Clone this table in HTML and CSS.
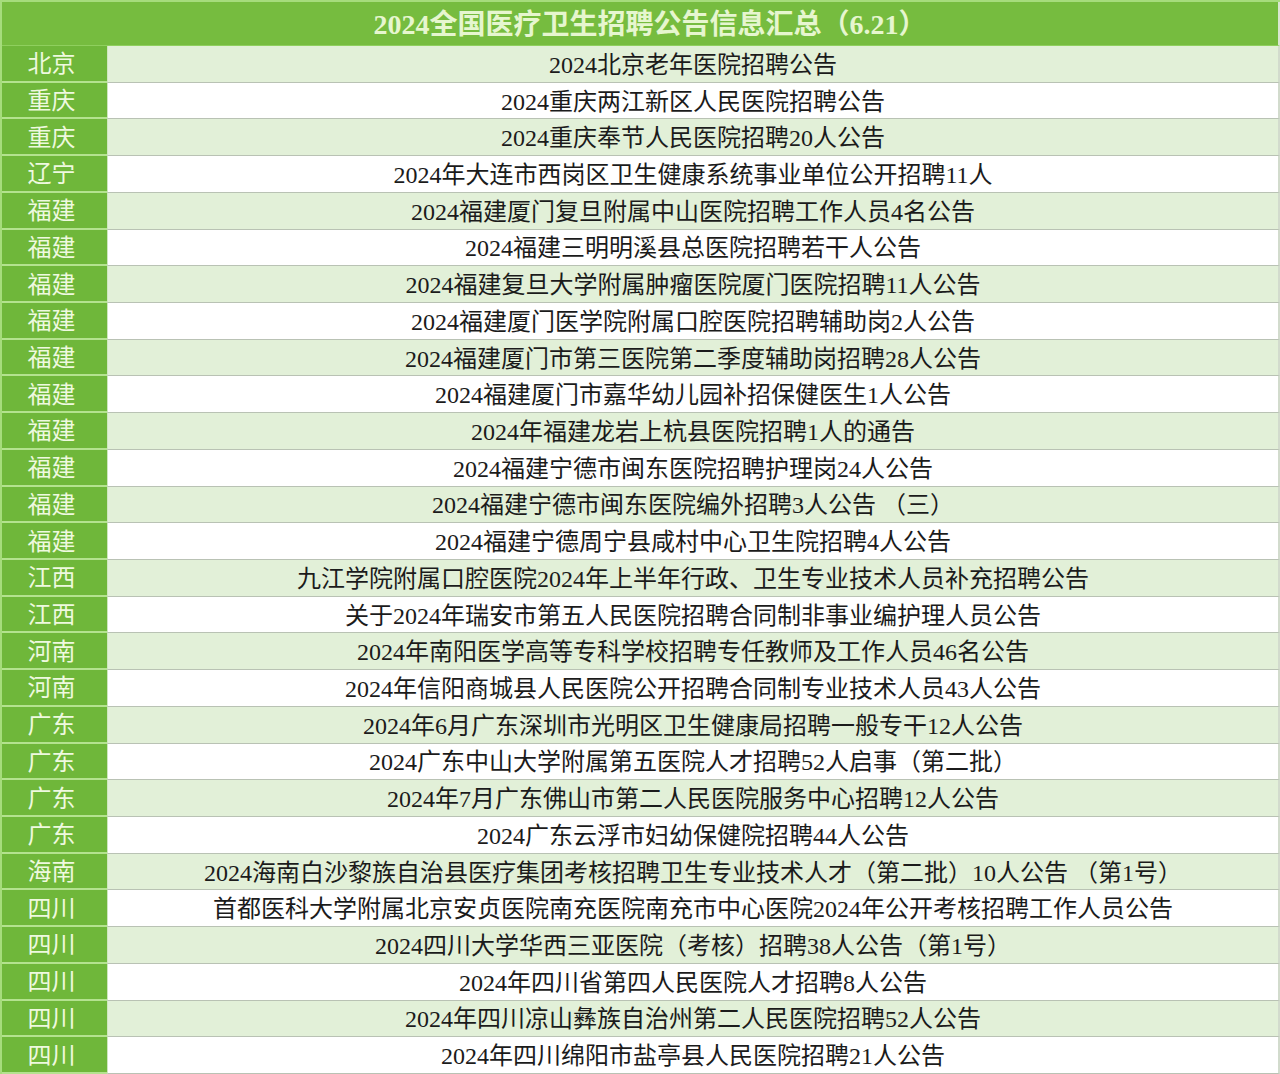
FILE: index.html
```html
<!DOCTYPE html>
<html lang="zh-CN">
<head>
<meta charset="utf-8">
<title>2024全国医疗卫生招聘公告信息汇总</title>
<link rel="stylesheet" href="styles.css">
</head>
<body>
<div class="sheet">
  <div class="title">2024全国医疗卫生招聘公告信息汇总（6.21）</div>

  <div class="prov">北京</div><div class="item odd">2024北京老年医院招聘公告</div>
  <div class="prov">重庆</div><div class="item">2024重庆两江新区人民医院招聘公告</div>
  <div class="prov">重庆</div><div class="item odd">2024重庆奉节人民医院招聘20人公告</div>
  <div class="prov">辽宁</div><div class="item">2024年大连市西岗区卫生健康系统事业单位公开招聘11人</div>
  <div class="prov">福建</div><div class="item odd">2024福建厦门复旦附属中山医院招聘工作人员4名公告</div>
  <div class="prov">福建</div><div class="item">2024福建三明明溪县总医院招聘若干人公告</div>
  <div class="prov">福建</div><div class="item odd">2024福建复旦大学附属肿瘤医院厦门医院招聘11人公告</div>
  <div class="prov">福建</div><div class="item">2024福建厦门医学院附属口腔医院招聘辅助岗2人公告</div>
  <div class="prov">福建</div><div class="item odd">2024福建厦门市第三医院第二季度辅助岗招聘28人公告</div>
  <div class="prov">福建</div><div class="item">2024福建厦门市嘉华幼儿园补招保健医生1人公告</div>
  <div class="prov">福建</div><div class="item odd">2024年福建龙岩上杭县医院招聘1人的通告</div>
  <div class="prov">福建</div><div class="item">2024福建宁德市闽东医院招聘护理岗24人公告</div>
  <div class="prov">福建</div><div class="item odd">2024福建宁德市闽东医院编外招聘3人公告 （三）</div>
  <div class="prov">福建</div><div class="item">2024福建宁德周宁县咸村中心卫生院招聘4人公告</div>
  <div class="prov">江西</div><div class="item odd">九江学院附属口腔医院2024年上半年行政、卫生专业技术人员补充招聘公告</div>
  <div class="prov">江西</div><div class="item">关于2024年瑞安市第五人民医院招聘合同制非事业编护理人员公告</div>
  <div class="prov">河南</div><div class="item odd">2024年南阳医学高等专科学校招聘专任教师及工作人员46名公告</div>
  <div class="prov">河南</div><div class="item">2024年信阳商城县人民医院公开招聘合同制专业技术人员43人公告</div>
  <div class="prov">广东</div><div class="item odd">2024年6月广东深圳市光明区卫生健康局招聘一般专干12人公告</div>
  <div class="prov">广东</div><div class="item">2024广东中山大学附属第五医院人才招聘52人启事（第二批）</div>
  <div class="prov">广东</div><div class="item odd">2024年7月广东佛山市第二人民医院服务中心招聘12人公告</div>
  <div class="prov">广东</div><div class="item">2024广东云浮市妇幼保健院招聘44人公告</div>
  <div class="prov">海南</div><div class="item odd">2024海南白沙黎族自治县医疗集团考核招聘卫生专业技术人才（第二批）10人公告 （第1号）</div>
  <div class="prov">四川</div><div class="item">首都医科大学附属北京安贞医院南充医院南充市中心医院2024年公开考核招聘工作人员公告</div>
  <div class="prov">四川</div><div class="item odd">2024四川大学华西三亚医院（考核）招聘38人公告（第1号）</div>
  <div class="prov">四川</div><div class="item">2024年四川省第四人民医院人才招聘8人公告</div>
  <div class="prov">四川</div><div class="item odd">2024年四川凉山彝族自治州第二人民医院招聘52人公告</div>
  <div class="prov">四川</div><div class="item">2024年四川绵阳市盐亭县人民医院招聘21人公告</div>
</div>
</body>
</html>
```

FILE: styles.css
```css
html, body {
  margin: 0;
  padding: 0;
  background: #ffffff;
}

body {
  font-family: "Liberation Serif", "Noto Sans CJK SC", serif;
  color: #1b1b1b;
}

.sheet {
  width: 1280px;
  height: 1074px;
  box-sizing: border-box;
  display: grid;
  grid-template-columns: 105px 1fr;
  grid-template-rows: 44px repeat(28, minmax(0, 1fr));
  border-left: 2px solid #a6dc7c;
  border-top: 2px solid #a6dc7c;
  background: #ffffff;
  overflow: hidden;
}

.title,
.prov,
.item {
  min-height: 0;
  line-height: 1;
  box-sizing: border-box;
  overflow: hidden;
}

.title {
  grid-column: 1 / 3;
  background: #76bc3f;
  color: #e6f6cf;
  font-size: 28px;
  font-weight: 700;
  display: flex;
  align-items: center;
  justify-content: center;
  padding-left: 20px;
  padding-top: 2px;
  border-bottom: 1px solid #8fcf5e;
  border-right: 2px solid #d9e6d1;
}

.prov {
  background: #6fb73a;
  color: #eef9df;
  font-size: 24px;
  display: flex;
  align-items: center;
  justify-content: center;
  padding-right: 6px;
  padding-top: 2px;
  border-bottom: 2px solid #b4e28f;
}

.item {
  background: #ffffff;
  font-size: 24px;
  display: flex;
  align-items: center;
  justify-content: center;
  white-space: nowrap;
  padding-top: 2px;
  border-bottom: 1px solid #b9c2b4;
  border-right: 2px solid #d2dbcd;
  border-left: 1px solid #cfe6bf;
}

.item.odd {
  background: #e2f0d8;
}
```
